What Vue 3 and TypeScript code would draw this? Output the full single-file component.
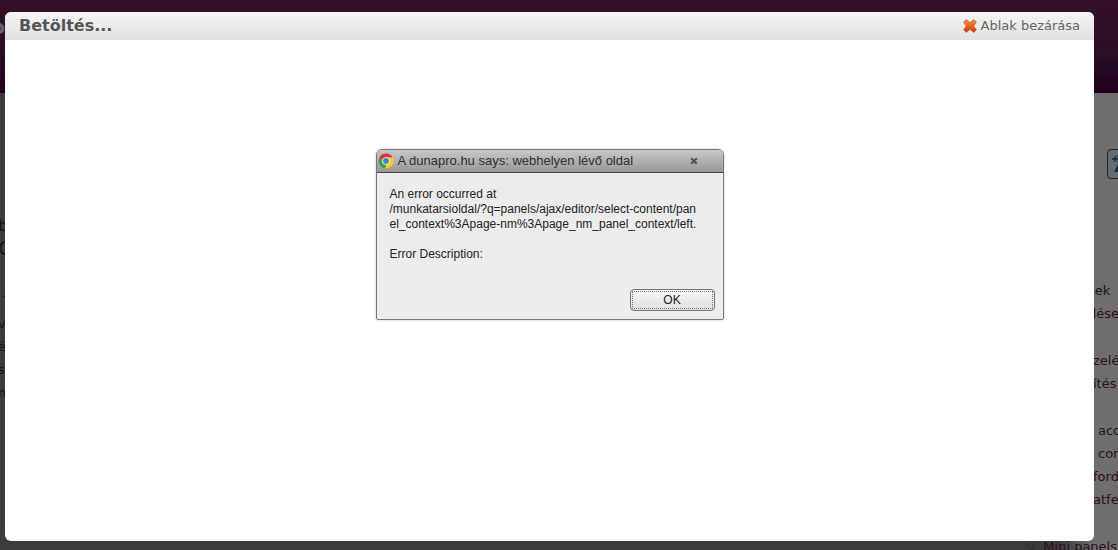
<script setup lang="ts">
interface Line { text: string; level: 'near' | 'mid' | 'far' }

const leftLines: string[] = ['v', 'é', 'si', 'm']
const groups: Line[][] = [
  [{ text: 'sek', level: 'near' }, { text: 'dések', level: 'near' }],
  [{ text: 'zelés', level: 'mid' }, { text: 'ítés', level: 'mid' }],
  [
    { text: 'access', level: 'far' },
    { text: 'content', level: 'far' },
    { text: 'fordítás', level: 'mid' },
    { text: 'atfelület', level: 'mid' },
  ],
]
</script>

<template>
  <div class="page">
    <div class="site" aria-hidden="true">
      <div class="banner"><span class="brand">o</span></div>
      <div class="columns">
        <div class="main">
          <div class="peek">
            <p class="crumb">b</p>
            <p class="headline">C</p>
            <p class="dot">.</p>
            <p v-for="line in leftLines" :key="line">{{ line }}</p>
          </div>
        </div>
        <div class="side">
          <div class="tool">
            <svg width="28" height="28" viewBox="0 0 28 28">
              <path d="M4 9h6M7 6v6" stroke="#1d2f3b" stroke-width="1.5" />
              <path d="M9 5h10v2l-5 15H6l4-8z" fill="#142c40" />
            </svg>
          </div>
          <ul v-for="(group, i) in groups" :key="i" class="group">
            <li v-for="line in group" :key="line.text" :class="line.level">{{ line.text }}</li>
          </ul>
        </div>
      </div>
      <p class="footer-item"><span class="bullet"></span>Mini panels</p>
    </div>

    <section class="modal" aria-labelledby="modal-title">
      <header class="modal-head">
        <h1 id="modal-title">Betöltés...</h1>
        <a class="close" href="#">
          <svg width="14" height="14" viewBox="0 0 14 14" aria-hidden="true">
            <defs>
              <linearGradient id="cross" x1="0" y1="0" x2="0" y2="1">
                <stop offset="0" stop-color="#ee9150" />
                <stop offset="0.5" stop-color="#e36324" />
                <stop offset="1" stop-color="#c63a0d" />
              </linearGradient>
            </defs>
            <path d="M3.2 0.6L7 3.6L10.8 0.6L13.4 3.2L10.6 7L13.4 10.8L10.8 13.4L7 10.4L3.2 13.4L0.6 10.8L3.4 7L0.6 3.2Z" fill="url(#cross)" stroke="#d85a22" stroke-width="0.8" stroke-linejoin="round" />
          </svg>
          <span>Ablak bezárása</span>
        </a>
      </header>

      <div class="dialog" role="alertdialog" aria-labelledby="alert-title" aria-describedby="alert-text">
        <div class="titlebar">
          <svg width="16" height="16" viewBox="0 0 16 16" aria-hidden="true">
            <path d="M8 8V4.25H14.5A7.5 7.5 0 0 1 8 15.5Z" fill="#f2cb2e" />
            <path d="M8 8L8 15.5A7.5 7.5 0 0 1 1.5 4.25L5 9Z" fill="#45a044" />
            <path d="M1.5 4.25A7.5 7.5 0 0 1 14.5 4.25H8L4.8 8Z" fill="#d9382c" />
            <path d="M11.2 9.5L8 15.5H7L9 10Z" fill="#f2cb2e" />
            <circle cx="8" cy="8" r="3.8" fill="#f4f4f4" />
            <circle cx="8" cy="8" r="2.9" fill="#4486c0" />
          </svg>
          <h2 id="alert-title">A dunapro.hu says: webhelyen lévő oldal</h2>
          <button class="dismiss" type="button" aria-label="Close">
            <svg width="8" height="8" viewBox="0 0 8 8"><path d="M1.2 1.2L6.8 6.8M6.8 1.2L1.2 6.8" stroke="#555" stroke-width="2.2" /></svg>
          </button>
        </div>
        <div class="alert-body">
          <p id="alert-text">An error occurred at<br>/munkatarsioldal/?q=panels/ajax/editor/select-content/pan<br>el_context%3Apage-nm%3Apage_nm_panel_context/left.<br><br>Error Description:</p>
          <button class="ok" type="button"><span>OK</span></button>
        </div>
      </div>
    </section>
  </div>
</template>

<style>
body {
  margin: 0;
}
</style>

<style scoped>
.page {
  position: relative;
  box-sizing: border-box;
  display: flex;
  min-height: 100vh;
  padding: 12px 24px 9px 5px;
  overflow: hidden;
  background: #3b3b3b;
  font-family: "DejaVu Sans", Verdana, sans-serif;
}

p,
h1,
h2,
ul {
  margin: 0;
  padding: 0;
}

.site {
  position: absolute;
  inset: 0;
  display: flex;
  flex-direction: column;
  overflow: hidden;
  font-size: 13px;
  line-height: 23px;
  color: #2a1020;
}

.banner {
  box-sizing: border-box;
  display: flex;
  height: 93px;
  padding-top: 16px;
  background: linear-gradient(#351029, #280d24 60%, #200020);
}

.brand {
  display: flex;
  justify-content: flex-end;
  width: 5px;
  font-size: 20px;
  font-weight: bold;
  color: #69606a;
}

.columns {
  display: flex;
  flex: 1;
}

.main {
  flex: 1;
}

.peek {
  width: 5px;
  margin-left: -2px;
  padding-top: 121px;
  color: #151515;
}

.crumb {
  font-size: 16px;
}

.headline {
  font-size: 20px;
}

.dot {
  padding: 22px 0 8px 4px;
  line-height: 22px;
}

.side {
  width: 58px;
  padding-top: 56px;
  background: linear-gradient(to right, #3b3b3b, #706d6e 34px);
  white-space: nowrap;
}

.tool {
  width: 28px;
  height: 28px;
  margin: 0 0 100px 47px;
  border: 1px solid #18242e;
  border-radius: 4px;
  background: #646c73;
}

.group {
  margin-bottom: 24px;
  list-style: none;
}

.near {
  padding-left: 28px;
}

.mid {
  padding-left: 33px;
}

.far {
  padding-left: 38px;
}

.footer-item {
  position: absolute;
  right: 1px;
  bottom: -8px;
  display: flex;
  align-items: center;
  gap: 8px;
  white-space: nowrap;
}

.bullet {
  width: 5px;
  height: 5px;
  border: 1px solid #302b2e;
  border-radius: 50%;
}

.modal {
  position: relative;
  flex: 1;
  display: flex;
  flex-direction: column;
  align-items: center;
  overflow: hidden;
  border-radius: 6px;
  background: #fff;
}

.modal-head {
  box-sizing: border-box;
  display: flex;
  align-self: stretch;
  align-items: center;
  justify-content: space-between;
  height: 28px;
  padding: 0 14px;
  background: linear-gradient(#f5f5f5, #e1e1e1);
}

.modal-head h1 {
  font-size: 16px;
  line-height: 28px;
  color: #555;
}

.close {
  display: flex;
  align-items: center;
  gap: 4px;
  font-size: 13px;
  line-height: 28px;
  color: #666;
  text-decoration: none;
}

.dialog {
  box-sizing: border-box;
  width: 348px;
  max-width: 100%;
  margin-top: 109px;
  border: 1px solid #777;
  border-radius: 6px 6px 2px 2px;
  background: #ececec;
  box-shadow: 0 0 3px #ccc;
  font-family: "Liberation Sans", Arial, sans-serif;
  color: #222;
}

.titlebar {
  box-sizing: border-box;
  display: flex;
  align-items: center;
  height: 23px;
  padding: 0 25px 0 1px;
  border-bottom: 1px solid #444;
  border-radius: 5px 5px 0 0;
  background: linear-gradient(#c8c8c8, #979797);
}

.titlebar h2 {
  flex: 1;
  margin-left: 4px;
  font-size: 13px;
  font-weight: normal;
  line-height: 22px;
  color: #303030;
}

.dismiss {
  display: flex;
  padding: 0;
  border: 0;
  background: none;
}

.alert-body {
  display: flex;
  flex-direction: column;
  padding: 14px 8px 8px 13px;
}

.alert-body p {
  font-size: 12px;
  line-height: 15px;
  white-space: nowrap;
}

.ok {
  align-self: flex-end;
  box-sizing: border-box;
  width: 85px;
  height: 22px;
  margin-top: 27px;
  padding: 1px;
  border: 1px solid #777;
  border-radius: 4px;
  background: linear-gradient(#f8f8f8, #dfdfdf);
  font: 12px/16px "Liberation Sans", Arial, sans-serif;
  color: #222;
}

.ok span {
  display: block;
  border: 1px dotted #777;
}
</style>
